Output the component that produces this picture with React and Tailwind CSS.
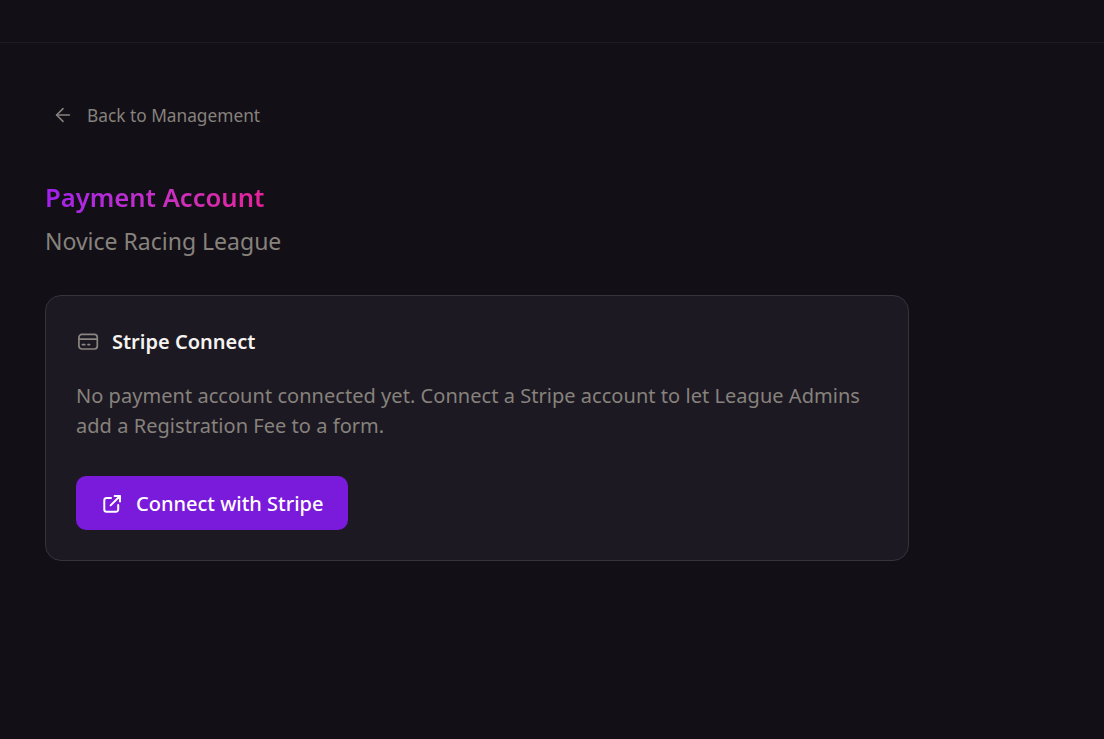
import { ArrowLeft } from "lucide-react";

function CardIcon() {
  return (
    <svg width="22" height="18" viewBox="0 0 22 18" fill="none" stroke="#8a8580" strokeWidth="1.7" strokeLinecap="round" className="shrink-0 ml-[1px]">
      <rect x="1.9" y="1.4" width="18.4" height="14.6" rx="3" />
      <path d="M2 6.2H20" />
      <path d="M5.4 11.6H7.8M11 11.6H12.6" />
    </svg>
  );
}

function LinkIcon() {
  return (
    <svg width="20" height="20" viewBox="0 0 20 20" fill="none" stroke="#fff" strokeWidth="2" strokeLinecap="round" strokeLinejoin="round" className="shrink-0 -mt-[1px]">
      <path d="M9 3.9H4.6A2.3 2.3 0 0 0 2.3 6.2V15.5A2.3 2.3 0 0 0 4.6 17.8H13.9A2.3 2.3 0 0 0 16.2 15.5V11" />
      <path d="M8.6 11.4L18 2M12.6 2H18V7.4" />
    </svg>
  );
}

export default function App() {
  return (
    <div className="min-h-[739px] bg-[#120f17] font-['Noto_Sans',sans-serif]">
      <header className="h-[43px] border-b border-[#1d1a23]" />
      <main className="w-[864px] ml-[45px] pt-[55px]">
        <a className="flex items-center h-9 pl-[7px] gap-[13px] text-[#87827c] text-[17.3px] leading-9">
          <ArrowLeft className="w-[22px] h-[22px] -mt-[2px]" strokeWidth={1.75} />
          <span>Back to Management</span>
        </a>
        <h1 className="mt-[46px] h-[36px] leading-[36px] text-[25.6px] font-semibold w-fit bg-gradient-to-r from-[#a21fee] to-[#e8209a] bg-clip-text text-transparent">
          Payment Account
        </h1>
        <p className="mt-[11px] text-[23px] leading-[28px] text-[#87827c]">Novice Racing League</p>
        <section className="mt-[40px] h-[266px] rounded-2xl border border-[#35343b] bg-[#1c1923] p-[30px]">
          <div className="flex items-center gap-[13px] h-[32px]">
            <CardIcon />
            <h2 className="text-[20px] font-semibold text-[#f5f3ef]">Stripe Connect</h2>
          </div>
          <p className="mt-[23px] text-[20px] leading-[30px] tracking-[0.04px] text-[#87827c]">
            No payment account connected yet. Connect a Stripe account to let League Admins add a Registration Fee to a form.
          </p>
          <button className="mt-[35px] flex items-center gap-[14px] h-[54px] w-[272px] pl-[26px] pt-[2px] rounded-[10px] bg-[#7a1adb] text-white text-[20px] font-medium">
            <LinkIcon />
            <span>Connect with Stripe</span>
          </button>
        </section>
      </main>
    </div>
  );
}
